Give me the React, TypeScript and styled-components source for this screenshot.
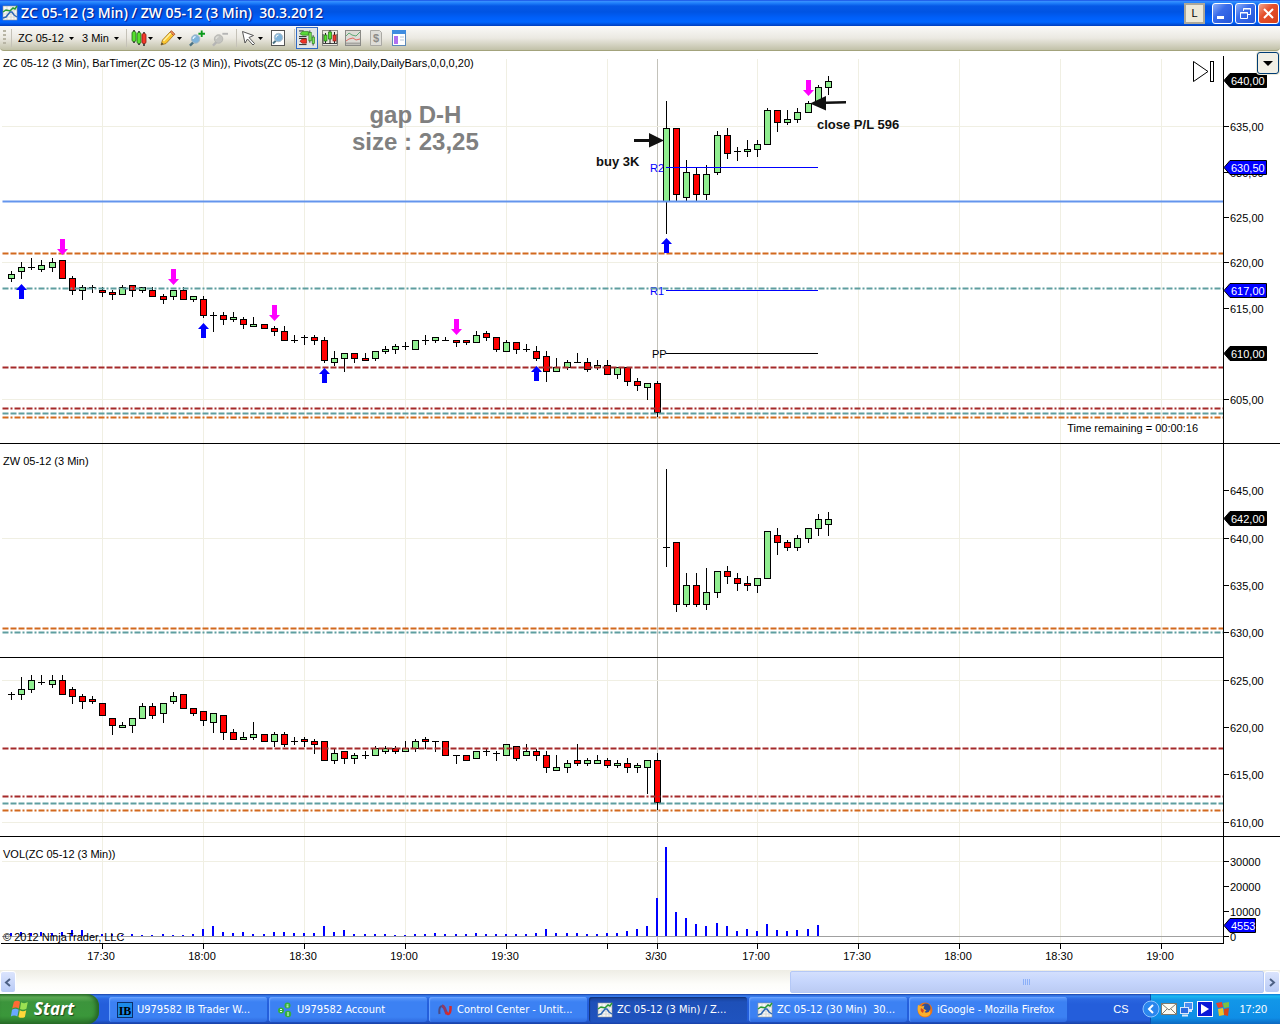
import React from "react";
import styled, { createGlobalStyle } from "styled-components";

const GlobalStyle = createGlobalStyle`
  * { box-sizing: border-box; }
  html, body { margin: 0; padding: 0; background: #fff; }
  body, button, select { font-family: "Liberation Sans", Arial, sans-serif; font-size: 11px; color: #000; }
  button, select { margin: 0; padding: 0; border: 0; background: none; }
`;

const Page = styled.div`
  display: flex;
  flex-direction: column;
  min-height: 100vh;
`;

/* ---------- Title bar ---------- */

const TitleBar = styled.header`
  display: flex;
  align-items: center;
  gap: 3px;
  height: 26px;
  padding: 0 1px 0 2px;
  background: linear-gradient(#0831d9 0, #3c93ff 1px, #2080fb 3px, #0558e6 6px, #0054e3 12px, #0060fa 18px, #0066ff 22px, #0053e1 24px, #003dbc 26px);
`;

const Title = styled.h1`
  flex: 1;
  margin: 0;
  font: 600 14px/20px "Open Sans", "Noto Sans", sans-serif;
  color: #fff;
  text-shadow: 1px 1px 1px #0a1883;
  white-space: pre;
`;

const LinkButton = styled.button`
  width: 21px;
  height: 21px;
  margin-right: 5px;
  border: 2px solid #aca899;
  background: #ece9d8;
`;

const WindowButton = styled.button<{ $close?: boolean }>`
  display: grid;
  place-items: center;
  width: 21px;
  height: 21px;
  margin-left: -1px;
  border: 1px solid #fff;
  border-radius: 3px;
  background: ${(p) =>
    p.$close
      ? "linear-gradient(135deg, #f0a68e, #e5502c 40%, #d6401a)"
      : "linear-gradient(135deg, #8fb0f8, #3a6cea 40%, #2456d8)"};
`;

/* ---------- Toolbar ---------- */

const Toolbar = styled.div`
  display: flex;
  align-items: center;
  gap: 1px;
  height: 25px;
  padding: 0 3px;
  border-bottom: 1px solid #a3a37c;
  border-radius: 0 0 4px 4px;
  background: linear-gradient(#fafaf8, #ebe9e2 50%, #c1c1a8);
`;

const Grip = styled.span`
  width: 3px;
  height: 16px;
  background: repeating-linear-gradient(#b8b5a5 0 2px, transparent 2px 4px);
`;

const Separator = styled.span`
  width: 1px;
  height: 18px;
  margin-left: 4px;
  background: #c5c2b8;
`;

const Picker = styled.label`
  display: flex;
  align-items: center;
  gap: 5px;
  padding: 0 2px 0 5px;
`;

const PickerSelect = styled.select`
  appearance: none;
  line-height: 16px;
`;

const ToolButton = styled.button<{ $menu?: boolean; $active?: boolean }>`
  display: flex;
  align-items: center;
  gap: 1px;
  width: ${(p) => (p.$menu ? 28 : 22)}px;
  height: 22px;
  padding: 0 2px;
  border: 1px solid ${(p) => (p.$active ? "#316ac5" : "transparent")};
  background: ${(p) => (p.$active ? "#e1e6e8" : "none")};
`;

/* ---------- Chart ---------- */

const ChartArea = styled.main`
  display: flex;
  flex-direction: column;
  flex: 1;
  background: #fff;
`;

const Panel = styled.section<{ $ruled?: boolean }>`
  position: relative;
  display: flex;
  ${(p) => (p.$ruled ? "border-bottom: 1px solid #000;" : "")}
`;

const Plot = styled.div`
  position: relative;
  flex: 1;
  min-width: 0;
`;

const Drawing = styled.svg`
  display: block;
  width: 100%;
`;

const AxisDrawing = styled.svg`
  display: block;
  flex: none;
  width: 57px;
  overflow: visible;
`;

const PanelTitle = styled.h2<{ $top: number }>`
  position: absolute;
  top: ${(p) => p.$top}px;
  left: 3px;
  margin: 0;
  font-size: 11px;
  font-weight: 400;
  line-height: 14px;
  white-space: nowrap;
`;

const TimeRemaining = styled.span`
  position: absolute;
  right: 25px;
  bottom: 8px;
  line-height: 14px;
`;

const GapNote = styled.p`
  position: absolute;
  top: 50px;
  left: 352px;
  margin: 0;
  font-size: 24px;
  font-weight: 700;
  line-height: 27px;
  text-align: center;
  color: #808080;
`;

const TradeNote = styled.p<{ $x: number; $y: number }>`
  position: absolute;
  top: ${(p) => p.$y}px;
  left: ${(p) => p.$x}px;
  margin: 0;
  font-size: 13px;
  font-weight: 700;
  line-height: 16px;
  color: #111;
`;

const LatestButton = styled.button`
  position: absolute;
  top: 9px;
  right: 8px;
`;

const AxisMenuButton = styled.button`
  position: absolute;
  top: 1px;
  right: 1px;
  display: grid;
  place-items: center;
  width: 22px;
  height: 22px;
  border: 1px solid #003c74;
  border-radius: 3px;
  background: #f1efe5;
  box-shadow: 0 0 0 1px #ece9d8;
`;

/* ---------- Horizontal scroll bar ---------- */

const ScrollBar = styled.div`
  display: flex;
  height: 24px;
  padding: 1px 0;
  background: linear-gradient(#eeede5, #fdfdfa 60%, #fff);
`;

const ScrollButton = styled.button`
  display: grid;
  place-items: center;
  width: 16px;
  border: 1px solid #fff;
  border-radius: 3px;
  background: linear-gradient(#dbe4fd, #b9cbf6);
`;

const ScrollSpace = styled.div`
  flex: 775;
`;

const ScrollThumb = styled.div`
  flex: 472;
  display: grid;
  place-items: center;
  border: 1px solid #b4c8f6;
  border-radius: 2px;
  background: linear-gradient(#d3dffd, #c5d5fc 50%, #bbcbf3);
`;

/* ---------- Task bar ---------- */

const TaskBar = styled.footer`
  display: flex;
  height: 30px;
  background: linear-gradient(#1941a5 0, #3a80f0 2px, #2a66e0 5px, #245edb 10px, #245edb 26px, #1941a5 30px);
`;

const StartButton = styled.button`
  display: flex;
  align-items: center;
  gap: 4px;
  width: 99px;
  padding: 0 0 1px 10px;
  border-radius: 0 12px 12px 0;
  background: linear-gradient(#2f7a2f 0, #5eac56 3px, #3c943c 8px, #3a973a 22px, #2a722a 30px);
  box-shadow: inset -3px 0 4px #256325;
  font: italic 700 17px/24px "Open Sans", "Noto Sans", sans-serif;
  color: #fff;
  text-shadow: 1px 1px 1px #1c4a1c;
`;

const TaskList = styled.nav`
  display: flex;
  flex: 1;
  gap: 2px;
  padding: 3px 0 2px 10px;
`;

const TaskButton = styled.button<{ $active?: boolean }>`
  display: flex;
  align-items: center;
  gap: 4px;
  width: 158px;
  padding: 0 8px;
  border-radius: 3px;
  background: ${(p) =>
    p.$active
      ? "linear-gradient(#173f94, #1e50b8 20%, #1f53bf)"
      : "linear-gradient(#5c9afc, #3c81f3 20%, #3c81f3 80%, #2f6be0)"};
  box-shadow: inset 1px 1px 1px ${(p) => (p.$active ? "#12347c" : "#6ba3ff")};
  font-family: "DejaVu Sans Condensed", "DejaVu Sans", sans-serif;
  color: #fff;
  white-space: nowrap;
`;

const TaskLabel = styled.span`
  white-space: pre;
`;

const Language = styled.span`
  align-self: center;
  margin-right: 22px;
  color: #fff;
`;

const Tray = styled.div`
  position: relative;
  display: flex;
  align-items: center;
  gap: 2px;
  padding: 0 13px 0 10px;
  border-left: 1px solid #0b4fb0;
  background: linear-gradient(#0d76d4 0, #19b9f2 2px, #1297e8 6px, #0f8ee6 24px, #0c68c0 30px);
  color: #fff;
`;

const TrayToggle = styled.button`
  position: absolute;
  left: -9px;
  top: 6px;
`;

const Clock = styled.time`
  margin-left: 6px;
`;

/* ---------- Chart data ---------- */

type Tone = "g" | "r" | "d";
/* high, body top, body bottom, low, tone */
type Bar = [number, number, number, number, Tone];

const LATE_STEPS = [4, 15, 25, 35, 44, 55];
const dayOneX = (i: number) => 11 + i * 10 + LATE_STEPS.filter((s) => s <= i).length;
const dayTwoX = (i: number) => 666 + i * 10 + (i >= 5 ? 1 : 0) + (i >= 14 ? 1 : 0);

const cornDayOne: Bar[] = [
  [271, 274, 279, 282, "g"], [262, 267, 272, 279, "g"], [258, 267, 268, 270, "d"], [260, 265, 270, 272, "g"],
  [258, 262, 268, 272, "g"], [260, 260, 279, 279, "r"], [276, 278, 291, 295, "r"], [285, 287, 291, 300, "g"],
  [285, 287, 288, 293, "d"], [287, 290, 293, 297, "r"], [290, 292, 295, 300, "r"], [285, 287, 295, 295, "g"],
  [285, 285, 291, 297, "r"], [287, 287, 291, 293, "g"], [287, 290, 297, 297, "r"], [294, 296, 300, 304, "r"],
  [290, 290, 297, 300, "g"], [287, 290, 300, 300, "r"], [296, 296, 300, 302, "g"], [296, 299, 316, 318, "r"],
  [312, 315, 316, 332, "d"], [312, 315, 320, 325, "r"], [312, 317, 320, 322, "g"], [317, 319, 325, 329, "r"],
  [317, 324, 327, 327, "g"], [324, 324, 329, 329, "r"], [326, 328, 332, 336, "r"], [326, 331, 341, 341, "r"],
  [335, 340, 341, 343, "d"], [335, 337, 338, 345, "d"], [335, 337, 341, 345, "r"], [337, 340, 361, 363, "r"],
  [351, 358, 363, 366, "g"], [353, 353, 359, 372, "g"], [353, 353, 359, 363, "r"], [353, 358, 361, 361, "r"],
  [351, 351, 359, 361, "g"], [346, 349, 352, 354, "g"], [344, 346, 350, 354, "g"], [342, 346, 347, 350, "d"],
  [340, 340, 350, 350, "g"], [335, 340, 341, 345, "d"], [337, 337, 341, 343, "g"], [337, 340, 341, 341, "d"],
  [340, 340, 343, 347, "r"], [340, 340, 343, 345, "r"], [331, 335, 343, 343, "g"], [331, 333, 338, 341, "r"],
  [337, 337, 350, 352, "r"], [340, 342, 352, 352, "g"], [342, 342, 350, 354, "r"], [344, 349, 350, 352, "d"],
  [346, 351, 359, 361, "r"], [351, 356, 372, 382, "r"], [358, 367, 372, 372, "g"], [360, 362, 368, 370, "g"],
  [353, 362, 363, 363, "d"], [358, 362, 370, 372, "r"], [360, 365, 368, 370, "g"], [360, 365, 375, 375, "r"],
  [367, 367, 375, 379, "g"], [367, 367, 382, 386, "r"], [378, 381, 386, 391, "r"], [383, 383, 388, 400, "g"],
  [381, 383, 413, 417, "r"],
];

const cornDayTwo: Bar[] = [
  [101, 128, 202, 234, "g"], [128, 128, 195, 201, "r"], [160, 172, 198, 201, "g"], [168, 174, 195, 201, "r"],
  [165, 174, 195, 200, "g"], [131, 135, 173, 175, "g"], [128, 135, 154, 159, "r"], [147, 151, 152, 161, "d"],
  [140, 149, 152, 157, "g"], [140, 144, 150, 157, "g"], [108, 110, 145, 145, "g"], [110, 110, 123, 132, "r"],
  [110, 119, 123, 125, "g"], [108, 112, 120, 123, "g"], [101, 103, 113, 113, "g"], [85, 87, 102, 103, "g"],
  [76, 81, 88, 95, "g"],
];

const wheatDayOne: Bar[] = [
  [692, 694, 695, 700, "d"], [677, 689, 695, 700, "g"], [675, 680, 690, 693, "g"], [675, 682, 683, 685, "d"],
  [675, 680, 685, 688, "g"], [675, 680, 695, 695, "r"], [687, 689, 697, 704, "r"], [694, 696, 702, 709, "r"],
  [696, 699, 702, 704, "r"], [703, 703, 716, 716, "r"], [718, 718, 726, 735, "r"], [722, 725, 728, 728, "g"],
  [718, 718, 726, 733, "g"], [703, 706, 719, 719, "g"], [703, 706, 716, 719, "r"], [703, 703, 714, 723, "g"],
  [692, 696, 702, 704, "g"], [694, 694, 709, 709, "r"], [708, 708, 714, 716, "r"], [711, 711, 721, 726, "r"],
  [713, 713, 723, 733, "g"], [715, 715, 733, 740, "r"], [729, 732, 740, 740, "r"], [732, 737, 740, 740, "g"],
  [722, 734, 738, 740, "g"], [734, 734, 742, 742, "r"], [732, 734, 742, 747, "g"], [732, 734, 745, 747, "r"],
  [737, 741, 742, 745, "d"], [737, 739, 742, 747, "r"], [739, 741, 745, 754, "r"], [741, 741, 761, 761, "r"],
  [749, 753, 761, 764, "g"], [751, 751, 759, 764, "r"], [753, 755, 759, 764, "g"], [751, 755, 756, 759, "d"],
  [746, 748, 756, 756, "g"], [746, 748, 752, 754, "g"], [746, 748, 752, 754, "r"], [741, 748, 752, 752, "g"],
  [739, 741, 749, 752, "g"], [737, 739, 742, 749, "r"], [741, 741, 742, 752, "d"], [741, 741, 756, 756, "r"],
  [755, 755, 756, 764, "d"], [755, 755, 761, 761, "r"], [751, 751, 759, 759, "g"], [749, 751, 752, 756, "d"],
  [751, 753, 754, 761, "d"], [744, 744, 756, 756, "g"], [746, 746, 759, 761, "r"], [744, 751, 756, 756, "g"],
  [749, 751, 756, 761, "r"], [751, 755, 768, 773, "r"], [755, 767, 771, 771, "g"], [760, 763, 768, 773, "g"],
  [744, 760, 764, 766, "r"], [758, 760, 764, 766, "g"], [755, 760, 764, 764, "g"], [758, 760, 766, 768, "r"],
  [760, 763, 766, 768, "g"], [758, 763, 768, 773, "r"], [763, 765, 768, 773, "g"], [760, 760, 768, 794, "g"],
  [753, 760, 803, 810, "r"],
];

const wheatDayTwo: Bar[] = [
  [469, 547, 548, 567, "d"], [542, 542, 605, 612, "r"], [573, 585, 605, 607, "g"], [573, 585, 605, 607, "r"],
  [568, 592, 605, 610, "g"], [571, 571, 593, 598, "g"], [566, 571, 577, 584, "r"], [573, 578, 584, 591, "r"],
  [576, 583, 586, 591, "r"], [578, 578, 586, 593, "g"], [531, 531, 579, 579, "g"], [528, 535, 543, 555, "r"],
  [540, 542, 548, 551, "r"], [535, 538, 548, 551, "g"], [528, 528, 539, 543, "g"], [514, 519, 529, 536, "g"],
  [512, 519, 525, 536, "g"],
];

const volumeDayOne = [
  3, 4, 3, 4, 3, 4, 6, 6, 1, 2, 2, 1, 2, 1, 1, 2, 1, 1, 2, 7, 10, 4, 3, 4, 2, 2, 4, 4, 3, 3, 3, 10, 4, 6, 2, 2, 2, 2,
  1, 1, 2, 2, 3, 2, 2, 2, 3, 2, 2, 2, 2, 2, 3, 7, 3, 3, 3, 2, 2, 3, 3, 5, 7, 10, 38,
];
const volumeDayTwo = [89, 24, 18, 12, 10, 13, 10, 5, 7, 5, 12, 6, 5, 6, 7, 11];

const times: [number, string][] = [
  [102, "17:30"], [203, "18:00"], [304, "18:30"], [405, "19:00"], [506, "19:30"], [607, ""], [657, "3/30"],
  [757, "17:00"], [858, "17:30"], [959, "18:00"], [1060, "18:30"], [1161, "19:00"],
];

const ORANGE = "#d2691e";
const TEAL = "#5f9ea0";
const BROWN = "#a52a2a";
const DASH = "6 2";
const DASH_DOT = "6 2 2 2";

/* ---------- Chart pieces ---------- */

const Candles = ({ bars, x }: { bars: Bar[]; x: (i: number) => number }) => (
  <g shapeRendering="crispEdges">
    {bars.map(([high, top, bottom, low, tone], i) => (
      <g key={i}>
        <rect x={x(i)} y={high} width={1} height={low - high} />
        <rect x={x(i) - 3} y={top} width={7} height={bottom - top} />
        {tone !== "d" && (
          <rect x={x(i) - 2} y={top + 1} width={5} height={bottom - top - 2} fill={tone === "g" ? "#90ee90" : "#f00"} />
        )}
      </g>
    ))}
  </g>
);

const Grid = ({ top, bottom, rows }: { top: number; bottom: number; rows: number[] }) => (
  <g fill="#f0efe3" shapeRendering="crispEdges">
    {times.map(([x]) => (
      <rect key={x} x={x} y={top} width={1} height={bottom - top} fill={x === 657 ? "#c3c2ba" : undefined} />
    ))}
    {rows.map((y) => (
      <rect key={y} x={2} y={y} width="100%" height={1} />
    ))}
  </g>
);

const Level = ({ y, color, dash }: { y: number; color: string; dash?: string }) => (
  <line x1={2.5} x2="100%" y1={y + 0.5} y2={y + 0.5} stroke={color} strokeWidth={2} strokeDasharray={dash} />
);

const SellMark = ({ x, y }: { x: number; y: number }) => (
  <path d={`M${x - 2} ${y}h5v10h3l-5.5 6l-5.5 -6h3z`} fill="#f0f" />
);

const BuyMark = ({ x, y }: { x: number; y: number }) => (
  <path d={`M${x - 2} ${y + 15}h5v-9h3l-5.5 -6l-5.5 6h3z`} fill="#00f" />
);

const Pivot = ({ y, name, color }: { y: number; name: string; color: string }) => (
  <g fill={color}>
    <text x={name === "PP" ? 652 : 650} y={y + 5} fontSize={11}>{name}</text>
    <rect x={666} y={y} width={152} height={1} />
  </g>
);

type Tick = [number, string, string?];

const ValueAxis = ({ top, height, start = top, ticks }: { top: number; height: number; start?: number; ticks: Tick[] }) => (
  <AxisDrawing height={height}>
    <g transform={`translate(0 ${-top})`} fontSize={11}>
      <rect x={0} y={start} width={1} height={top + height - start} />
      {ticks.map(([y, label, flag]) =>
        flag ? (
          <g key={y}>
            <path d={`M1 ${y + 0.5}L7 ${y - 6.5}H${label.length > 4 ? 43.5 : 32.5}V${y + 7.5}H7z`} fill={flag} stroke="#000" />
            <text x={8} y={y + 5} fill="#fff">{label}</text>
          </g>
        ) : (
          <g key={y}>
            <rect x={1} y={y} width={5} height={1} />
            <text x={7} y={y + 5}>{label}</text>
          </g>
        )
      )}
    </g>
  </AxisDrawing>
);

/* ---------- Icons ---------- */

const Caret = () => (
  <svg width="5" height="3" viewBox="0 0 5 3" aria-hidden="true"><path d="M0 0h5L2.5 3z" /></svg>
);

const ChartIcon = () => (
  <svg width="16" height="16" viewBox="0 0 16 16" aria-hidden="true">
    <rect x="1" y="1" width="14" height="14" fill="#f6f8f6" stroke="#9a9a9a" strokeWidth=".6" />
    <path d="M1 5h14M1 9h14M1 12h14M5 1v14M9 1v14M12 1v14" stroke="#c6c6c6" strokeWidth=".6" />
    <path d="M1 7l3-2 4 1 3-3 2 1 2-3" fill="none" stroke="#279b35" strokeWidth="1.5" />
    <path d="M1 13l3-1 4-5h2l2 3 3 2" fill="none" stroke="#2d68b5" strokeWidth="1.5" />
  </svg>
);

const CandleIcon = () => (
  <svg width="16" height="16" viewBox="0 0 16 16" aria-hidden="true">
    <path d="M3 0v13M8 1v14M13 2v14" stroke="#222" strokeWidth="1.5" />
    <rect x="1" y="1.5" width="4" height="10" rx="1.5" fill="#58e030" stroke="#1f6a14" strokeWidth=".8" />
    <rect x="6" y="2.5" width="4" height="11" rx="1.5" fill="#58e030" stroke="#1f6a14" strokeWidth=".8" />
    <rect x="11" y="3.5" width="4" height="10" rx="1.5" fill="#f23a2a" stroke="#8c1c14" strokeWidth=".8" />
  </svg>
);

const PencilIcon = () => (
  <svg width="16" height="16" viewBox="0 0 16 16" aria-hidden="true">
    <path d="M1 15l1.5-5L10 2l3.500 3.500L6 13.5z" fill="#fbc62f" stroke="#a0701c" strokeWidth=".8" />
    <path d="M10 2l1.5-1.300 3.500 3.500-1.500 1.300z" fill="#f08a54" stroke="#a0552c" strokeWidth=".8" />
    <path d="M3.500 11l7.500-8" stroke="#fff2a0" strokeWidth="1.5" />
    <path d="M1 15l.8-2.500L3.500 14z" fill="#444" />
  </svg>
);

const LensIcon = ({ sign, faded }: { sign: "+" | "-"; faded?: boolean }) => (
  <svg width="17" height="17" viewBox="0 0 17 17" aria-hidden="true">
    <path d="M1 16l4-4" stroke={faded ? "#b5b5b5" : "#4b7385"} strokeWidth="2.5" />
    <circle cx="7" cy="9" r="4.5" fill={faded ? "#c4c4c0" : "#7fb3da"} stroke={faded ? "#b4b4b0" : "#a3b8c4"} />
    <path d="M4.500 9a2.500 2.500 0 0 1 2.500-2.500" fill="none" stroke={faded ? "#deded8" : "#e7f4ff"} strokeWidth="1.5" />
    <path d={sign === "+" ? "M13.500 0v7M10 3.500h7" : "M11 3.500h6"} stroke={faded ? "#b5b5b5" : "#0c9a1c"} strokeWidth="2" />
  </svg>
);

const CursorIcon = () => (
  <svg width="16" height="16" viewBox="0 0 16 16" aria-hidden="true">
    <path d="M1.500 1.500l11 4-4.500 2 5.500 6-1.500 1.500-5.500-6-2.500 4z" fill="#fff" stroke="#555" />
  </svg>
);

const PageLensIcon = () => (
  <svg width="16" height="16" viewBox="0 0 16 16" aria-hidden="true">
    <rect x="1.500" y=".5" width="13" height="15" fill="#fff" stroke="#555" />
    <path d="M3 13.500l3-3" stroke="#4b7385" strokeWidth="2" />
    <circle cx="8.500" cy="7.500" r="4.200" fill="#7fb3da" stroke="#b0bfc9" />
    <path d="M6 7.500a2.500 2.500 0 0 1 2.500-2.500" fill="none" stroke="#fff" />
  </svg>
);

const TraderIcon = () => (
  <svg width="17" height="16" viewBox="0 0 17 16" aria-hidden="true">
    <path d="M0 .5h5M0 6.500h8M0 8.500h8M0 15h8" stroke="#222" />
    <path d="M1 3.500L3.500 1H10v4H3.500z" fill="#58d838" stroke="#2a7a1c" strokeWidth=".7" />
    <path d="M1 11.500L3.500 9H8v4.500H3.500z" fill="#ef3327" stroke="#8c1c14" strokeWidth=".7" />
    <path d="M11.500 0v13M15 5v11" stroke="#333" />
    <rect x="10.500" y="2" width="2.500" height="9" fill="#7ce65a" stroke="#2a7a1c" strokeWidth=".7" />
    <rect x="14" y="7" width="2.500" height="7" fill="#7ce65a" stroke="#2a7a1c" strokeWidth=".7" />
  </svg>
);

const BoxedCandlesIcon = () => (
  <svg width="16" height="16" viewBox="0 0 16 16" aria-hidden="true">
    <rect x=".5" y=".5" width="15" height="15" fill="#eceae2" stroke="#8c8b84" />
    <path d="M1 4v9.500h14V4" fill="none" stroke="#444" />
    <path d="M3.500 3v10M8 0v14M12.500 2v11" stroke="#222" />
    <rect x="2" y="5" width="3" height="6" fill="#58e030" stroke="#1f6a14" strokeWidth=".7" />
    <rect x="6.500" y="2" width="3" height="7" fill="#58e030" stroke="#1f6a14" strokeWidth=".7" />
    <rect x="11" y="5" width="3" height="6" fill="#ef3b30" stroke="#8c1c14" strokeWidth=".7" />
  </svg>
);

const LinesIcon = () => (
  <svg width="16" height="16" viewBox="0 0 16 16" aria-hidden="true">
    <rect x=".5" y=".5" width="15" height="15" fill="#dddcd6" stroke="#8a8a86" />
    <path d="M1 13.500h14" stroke="#a6a5a0" strokeWidth="2" />
    <path d="M1 6l3-3 3 2 4 1 4-4" fill="none" stroke="#5fa876" />
    <path d="M1 11l3-2 4-1 3 2 4-1" fill="none" stroke="#dd6a62" />
  </svg>
);

const DollarIcon = () => (
  <svg width="16" height="16" viewBox="0 0 16 16" aria-hidden="true">
    <path d="M2.500.5h9l2 2v13h-11z" fill="#deddd8" stroke="#aaa9a4" />
    <text x="8" y="12" fontSize="11" fontWeight="700" textAnchor="middle" fill="#8c8b87">$</text>
  </svg>
);

const PanelIcon = () => (
  <svg width="16" height="16" viewBox="0 0 16 16" aria-hidden="true">
    <rect x="1.500" y=".5" width="13" height="15" fill="#fff" stroke="#5b88b8" />
    <rect x="1" y="0" width="14" height="4" fill="#3f8ce0" />
    <rect x="3" y="6" width="4" height="8" fill="#b070f0" />
    <path d="M9 7h4M9 10h4" stroke="#b4c8dd" />
  </svg>
);

const WindowsLogo = () => (
  <svg width="20" height="20" viewBox="0 0 18 18" aria-hidden="true">
    <path d="M3.500 2.500q3-2 5.500 0L8 8.500q-3-1.700-6 0z" fill="#ff6a35" />
    <path d="M10 3q3 1.600 6-.2l-1.200 6q-3 1.600-5.800.2z" fill="#9be052" />
    <path d="M1.800 9.700q3-1.700 6 0l-1.200 6q-2.800-1.700-5.800 0z" fill="#6aa8ff" />
    <path d="M8.800 10.200q3 1.600 5.800-.1l-1.200 6q-3 1.700-5.800 0z" fill="#ffd83a" />
  </svg>
);

const IbIcon = () => (
  <svg width="16" height="16" viewBox="0 0 16 16" aria-hidden="true">
    <rect width="16" height="16" fill="#1c8be8" />
    <rect x=".5" y=".5" width="15" height="15" fill="none" stroke="#0b2f6a" />
    <text x="8" y="13" fontFamily="Liberation Serif, serif" fontSize="12" fontWeight="700" textAnchor="middle">IB</text>
  </svg>
);

const AccountIcon = () => (
  <svg width="16" height="16" viewBox="0 0 16 16" aria-hidden="true">
    <circle cx="4" cy="8.500" r="3" fill="#35b13c" />
    <circle cx="10.500" cy="3.500" r="3" fill="#35b13c" />
    <circle cx="11" cy="12" r="3.200" fill="#35b13c" />
    <path d="M3 7.500h2M3 9.500h2M9.500 3h2M9.500 4.800h2M10 11h2M10 13h2" stroke="#e8ffe8" />
  </svg>
);

const NinjaIcon = () => (
  <svg width="16" height="16" viewBox="0 0 16 16" aria-hidden="true">
    <path d="M2.500 12c-1-7 2-10 4.500-6" fill="none" stroke="#4c4c86" strokeWidth="2" />
    <path d="M5 4c3 0 3 5 5 8" fill="none" stroke="#8c3c68" strokeWidth="3" />
    <path d="M9 10c2 4 5 2 4.500-6" fill="none" stroke="#d42a2c" strokeWidth="2.500" />
  </svg>
);

const FirefoxIcon = () => (
  <svg width="16" height="16" viewBox="0 0 16 16" aria-hidden="true">
    <circle cx="8" cy="8" r="7.500" fill="#e8731b" />
    <circle cx="9" cy="6" r="4.500" fill="#2b4f9e" />
    <path d="M1 3l3.500 1.500 3-1-1 3 3 2-2 1.500C9 12 12 11 13 8c1.500 5-2 7-6 6.500S-.5 10 1 3z" fill="#fbb02c" />
    <path d="M4 6l3 2-1 3c-2-1-3-3-2-5z" fill="#d8451a" />
  </svg>
);

const MailIcon = () => (
  <svg width="16" height="16" viewBox="0 0 16 16" aria-hidden="true">
    <rect x="0.500" y="2.500" width="15" height="11" fill="#fbfbf2" stroke="#7b7b70" />
    <path d="M1 3l7 6 7-6M1 13l5-5M15 13l-5-5" fill="none" stroke="#7b7b70" />
  </svg>
);

const NetworkIcon = () => (
  <svg width="16" height="16" viewBox="0 0 16 16" aria-hidden="true">
    <rect x="5.500" y="1.500" width="8" height="7" fill="#4a8cf0" stroke="#dce8f8" />
    <path d="M8 10h5" stroke="#dce8f8" strokeWidth="2" />
    <rect x="1.500" y="6.500" width="8" height="6" fill="#2b6ce0" stroke="#dce8f8" />
    <path d="M3 14.500h6" stroke="#dce8f8" strokeWidth="2" />
  </svg>
);

const PlayIcon = () => (
  <svg width="16" height="16" viewBox="0 0 16 16" aria-hidden="true">
    <rect x=".5" y=".5" width="15" height="15" fill="#0a19d8" stroke="#fff" />
    <path d="M4 3l8 5-8 5z" fill="#fff" />
  </svg>
);

const ShieldIcon = () => (
  <svg width="16" height="16" viewBox="0 0 16 16" aria-hidden="true">
    <path d="M1 2l6-1 1 5-5 1z" fill="#e4432a" />
    <path d="M8 2l6-1v5L9 7z" fill="#7cc142" />
    <path d="M3 8l5-1 1 7-5 1z" fill="#f0c22c" />
    <path d="M9 8l5-1-1 8-4-1z" fill="#d8451a" />
  </svg>
);

/* ---------- Screen ---------- */

const tasks: { label: string; Icon: () => React.JSX.Element; active?: boolean }[] = [
  { label: "U979582 IB Trader W...", Icon: IbIcon },
  { label: "U979582 Account", Icon: AccountIcon },
  { label: "Control Center - Untit...", Icon: NinjaIcon },
  { label: "ZC 05-12 (3 Min) / Z...", Icon: ChartIcon, active: true },
  { label: "ZC 05-12 (30 Min)  30...", Icon: ChartIcon },
  { label: "iGoogle - Mozilla Firefox", Icon: FirefoxIcon },
];

export default function App() {
  return (
    <Page>
      <GlobalStyle />
      <TitleBar>
        <ChartIcon />
        <Title>{"ZC 05-12 (3 Min) / ZW 05-12 (3 Min)  30.3.2012"}</Title>
        <LinkButton>L</LinkButton>
        <WindowButton aria-label="Minimize">
          <svg width="13" height="13"><rect x="1" y="9" width="7" height="3" fill="#fff" /></svg>
        </WindowButton>
        <WindowButton aria-label="Restore">
          <svg width="13" height="13" fill="none" stroke="#fff">
            <path d="M4.500 4V1.500h7v6H9M4 2h8" />
            <path d="M1.500 5.500h7v6h-7zM1 6h8" />
          </svg>
        </WindowButton>
        <WindowButton aria-label="Close" $close>
          <svg width="13" height="13"><path d="M2 2l9 9M11 2l-9 9" stroke="#fff" strokeWidth="2" /></svg>
        </WindowButton>
      </TitleBar>

      <Toolbar role="toolbar" aria-label="Chart tools">
        <Grip />
        <Separator />
        <Picker>
          <PickerSelect aria-label="Instrument"><option>ZC 05-12</option></PickerSelect>
          <Caret />
        </Picker>
        <Picker>
          <PickerSelect aria-label="Interval"><option>3 Min</option></PickerSelect>
          <Caret />
        </Picker>
        <Separator />
        <ToolButton $menu aria-label="Chart style"><CandleIcon /><Caret /></ToolButton>
        <ToolButton $menu aria-label="Drawing tools"><PencilIcon /><Caret /></ToolButton>
        <ToolButton aria-label="Zoom in"><LensIcon sign="+" /></ToolButton>
        <ToolButton aria-label="Zoom out"><LensIcon sign="-" faded /></ToolButton>
        <Separator />
        <ToolButton $menu aria-label="Cursor"><CursorIcon /><Caret /></ToolButton>
        <ToolButton aria-label="Data box"><PageLensIcon /></ToolButton>
        <Separator />
        <ToolButton $active aria-label="Chart trader"><TraderIcon /></ToolButton>
        <ToolButton aria-label="Data series"><BoxedCandlesIcon /></ToolButton>
        <ToolButton aria-label="Indicators"><LinesIcon /></ToolButton>
        <ToolButton aria-label="Strategies"><DollarIcon /></ToolButton>
        <ToolButton aria-label="Properties"><PanelIcon /></ToolButton>
      </Toolbar>

      <ChartArea>
        <Panel $ruled>
          <Plot>
            <Drawing height={392}>
              <g transform="translate(0 -51)">
                <Grid top={59} bottom={443} rows={[126, 262, 399]} />
                <Candles bars={cornDayOne} x={dayOneX} />
                <Candles bars={cornDayTwo} x={dayTwoX} />
                <Pivot y={167} name="R2" color="#00f" />
                <Pivot y={290} name="R1" color="#00f" />
                <Pivot y={353} name="PP" color="#000" />
                <Level y={201} color="#6495ed" />
                <Level y={253} color={ORANGE} dash={DASH} />
                <Level y={288} color={TEAL} dash={DASH_DOT} />
                <Level y={367} color={BROWN} dash={DASH} />
                <Level y={408} color={BROWN} dash={DASH_DOT} />
                <Level y={413} color={TEAL} dash={DASH} />
                <Level y={417} color={ORANGE} dash={DASH_DOT} />
                <SellMark x={62} y={239} />
                <SellMark x={173} y={269} />
                <SellMark x={274} y={305} />
                <SellMark x={456} y={319} />
                <SellMark x={808} y={80} />
                <BuyMark x={21} y={284} />
                <BuyMark x={203} y={323} />
                <BuyMark x={324} y={368} />
                <BuyMark x={536} y={366} />
                <BuyMark x={666} y={238} />
                <path d="M634 139h15v-6l15 7.500-15 7v-5.500h-15z" fill="#111" />
                <path d="M846 101l-20 .5V96l-16 7.500 16 7V104l20-.5z" fill="#111" />
              </g>
            </Drawing>
            <PanelTitle $top={5}>
              ZC 05-12 (3 Min), BarTimer(ZC 05-12 (3 Min)), Pivots(ZC 05-12 (3 Min),Daily,DailyBars,0,0,0,20)
            </PanelTitle>
            <GapNote>gap D-H<br />size : 23,25</GapNote>
            <TradeNote $x={596} $y={103}>buy 3K</TradeNote>
            <TradeNote $x={817} $y={66}>close P/L 596</TradeNote>
            <LatestButton aria-label="Go to latest bar">
              <svg width="24" height="24" fill="none" stroke="#000">
                <path d="M2.500 1.500v20L17 11.500z" />
                <rect x="19.500" y="1.500" width="3" height="20" />
              </svg>
            </LatestButton>
            <TimeRemaining>Time remaining = 00:00:16</TimeRemaining>
          </Plot>
          <ValueAxis
            top={51}
            height={392}
            start={56}
            ticks={[
              [126, "635,00"], [172, "630,00"], [217, "625,00"], [262, "620,00"], [308, "615,00"], [399, "605,00"],
              [80, "640,00", "#000"], [167, "630,50", "#00f"], [290, "617,00", "#00f"], [353, "610,00", "#000"],
            ]}
          />
          <AxisMenuButton aria-label="Axis options">
            <svg width="10" height="5"><path d="M0 0h10L5 5z" /></svg>
          </AxisMenuButton>
        </Panel>

        <Panel $ruled>
          <Plot>
            <Drawing height={392}>
              <g transform="translate(0 -444)">
                <Grid top={444} bottom={836} rows={[538, 680, 822]} />
                <Candles bars={wheatDayOne} x={dayOneX} />
                <Candles bars={wheatDayTwo} x={dayTwoX} />
                <Level y={628} color={ORANGE} dash={DASH} />
                <Level y={632} color={TEAL} dash={DASH_DOT} />
                <Level y={748} color={BROWN} dash={DASH} />
                <Level y={796} color={BROWN} dash={DASH_DOT} />
                <Level y={803} color={TEAL} dash={DASH} />
                <Level y={810} color={ORANGE} dash={DASH_DOT} />
                <rect x={0} y={657} width="100%" height={1} />
              </g>
            </Drawing>
            <PanelTitle $top={10}>ZW 05-12 (3 Min)</PanelTitle>
          </Plot>
          <ValueAxis
            top={444}
            height={392}
            ticks={[
              [490, "645,00"], [538, "640,00"], [585, "635,00"], [632, "630,00"], [680, "625,00"], [727, "620,00"],
              [774, "615,00"], [822, "610,00"], [518, "642,00", "#000"],
            ]}
          />
        </Panel>

        <Panel>
          <Plot>
            <Drawing height={107}>
              <g transform="translate(0 -837)" shapeRendering="crispEdges">
                <Grid top={837} bottom={943} rows={[861]} />
                <rect x={2} y={936} width="100%" height={1} fill="#a0a0a0" />
                <g fill="#00f">
                  {volumeDayOne.map((v, i) => <rect key={i} x={dayOneX(i) - 1} y={936 - v} width={2} height={v} />)}
                  {volumeDayTwo.map((v, i) => <rect key={i} x={dayTwoX(i) - 1} y={936 - v} width={2} height={v} />)}
                </g>
                <rect x={1} y={943} width="100%" height={1} />
              </g>
            </Drawing>
            <PanelTitle $top={10}>VOL(ZC 05-12 (3 Min))</PanelTitle>
            <PanelTitle as="p" $top={93}>© 2012 NinjaTrader, LLC</PanelTitle>
          </Plot>
          <ValueAxis
            top={837}
            height={107}
            ticks={[[861, "30000"], [886, "20000"], [911, "10000"], [936, "0"], [925, "4553", "#00f"]]}
          />
        </Panel>

        <Drawing height={26} fontSize={11}>
          {times.map(([x, label]) => (
            <g key={x}>
              <rect x={x} y={0} width={1} height={5} />
              <text x={x - 1} y={16} textAnchor="middle">{label}</text>
            </g>
          ))}
        </Drawing>
      </ChartArea>

      <ScrollBar>
        <ScrollButton aria-label="Scroll left">
          <svg width="8" height="9" fill="none" stroke="#4d6185" strokeWidth="2"><path d="M6 1L2 4.500l4 3.500" /></svg>
        </ScrollButton>
        <ScrollSpace />
        <ScrollThumb>
          <svg width="8" height="6"><path d="M.5 0v6M2.500 0v6M4.500 0v6M6.500 0v6" stroke="#8cb0f8" /></svg>
        </ScrollThumb>
        <ScrollButton aria-label="Scroll right">
          <svg width="8" height="9" fill="none" stroke="#4d6185" strokeWidth="2"><path d="M2 1l4 3.500L2 8" /></svg>
        </ScrollButton>
      </ScrollBar>

      <TaskBar>
        <StartButton><WindowsLogo />Start</StartButton>
        <TaskList aria-label="Open windows">
          {tasks.map(({ label, Icon, active }) => (
            <TaskButton key={label} $active={active}><Icon /><TaskLabel>{label}</TaskLabel></TaskButton>
          ))}
        </TaskList>
        <Language>CS</Language>
        <Tray>
          <TrayToggle aria-label="Show hidden icons">
            <svg width="18" height="18">
              <circle cx="9" cy="9" r="8" fill="#2a86ee" stroke="#8cc4ff" />
              <path d="M11 5L7 9l4 4" fill="none" stroke="#fff" strokeWidth="2" />
            </svg>
          </TrayToggle>
          <MailIcon />
          <NetworkIcon />
          <PlayIcon />
          <ShieldIcon />
          <Clock>17:20</Clock>
        </Tray>
      </TaskBar>
    </Page>
  );
}
